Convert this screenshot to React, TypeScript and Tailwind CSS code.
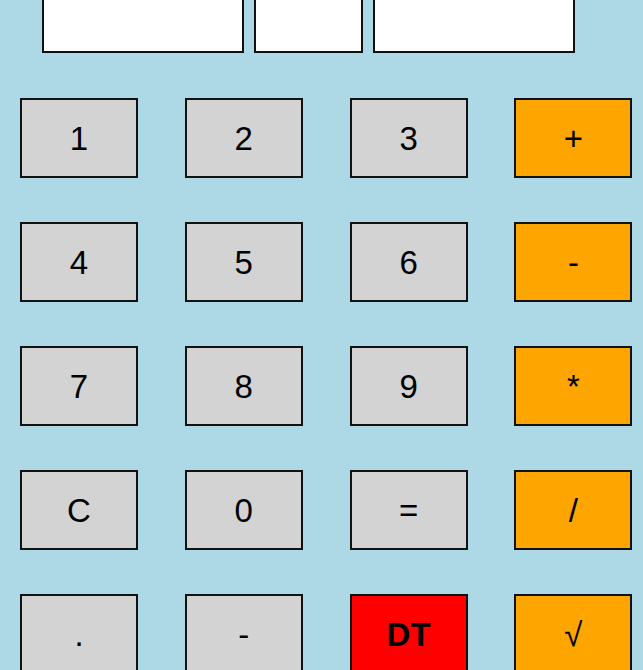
import React from "react";

type Btn = { label: string; bg: string; bold?: boolean };

const rows: Btn[][] = [
  [
    { label: "1", bg: "bg-[#d3d3d3]" },
    { label: "2", bg: "bg-[#d3d3d3]" },
    { label: "3", bg: "bg-[#d3d3d3]" },
    { label: "+", bg: "bg-[#ffa500]" },
  ],
  [
    { label: "4", bg: "bg-[#d3d3d3]" },
    { label: "5", bg: "bg-[#d3d3d3]" },
    { label: "6", bg: "bg-[#d3d3d3]" },
    { label: "-", bg: "bg-[#ffa500]" },
  ],
  [
    { label: "7", bg: "bg-[#d3d3d3]" },
    { label: "8", bg: "bg-[#d3d3d3]" },
    { label: "9", bg: "bg-[#d3d3d3]" },
    { label: "*", bg: "bg-[#ffa500]" },
  ],
  [
    { label: "C", bg: "bg-[#d3d3d3]" },
    { label: "0", bg: "bg-[#d3d3d3]" },
    { label: "=", bg: "bg-[#d3d3d3]" },
    { label: "/", bg: "bg-[#ffa500]" },
  ],
  [
    { label: ".", bg: "bg-[#d3d3d3]" },
    { label: "-", bg: "bg-[#d3d3d3]" },
    { label: "DT", bg: "bg-[#ff0000]", bold: true },
    { label: "√", bg: "bg-[#ffa500]" },
  ],
];

export default function App() {
  return (
    <div
      className="w-[643px] h-[670px] overflow-hidden bg-[#add8e6] text-black"
      style={{ fontFamily: "'Liberation Sans', Arial, sans-serif" }}
    >
      <div className="flex gap-[10px] ml-[42px] mt-[-7px]">
        <div className="w-[202px] h-[60px] bg-white border-2 border-[#111]" />
        <div className="w-[109px] h-[60px] bg-white border-2 border-[#111]" />
        <div className="w-[202px] h-[60px] bg-white border-2 border-[#111]" />
      </div>
      <div className="mt-[45px] ml-[20px] grid grid-cols-[118px_118px_118px_118px] gap-x-[46.8px] gap-y-[44px]">
        {rows.flat().map((b, i) => (
          <div
            key={i}
            className={`h-[80px] flex items-center justify-center border-2 border-[#111] ${b.bg} text-[33px] leading-none ${
              b.bold ? "font-bold" : "font-normal"
            }`}
          >
            {b.label}
          </div>
        ))}
      </div>
    </div>
  );
}
